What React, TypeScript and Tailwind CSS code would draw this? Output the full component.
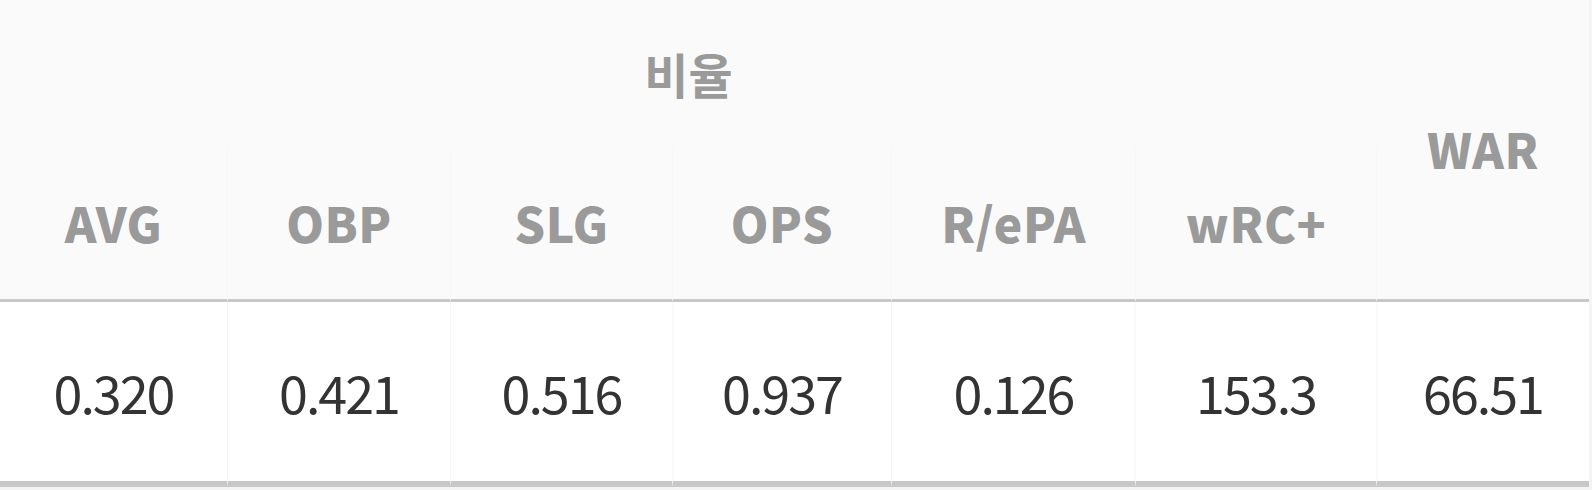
const cols = [
  { key: "AVG", w: "w-[228px]", value: "0.320" },
  { key: "OBP", w: "w-[223px]", value: "0.421" },
  { key: "SLG", w: "w-[222px]", value: "0.516" },
  { key: "OPS", w: "w-[219px]", value: "0.937" },
  { key: "R/ePA", w: "w-[244px]", value: "0.126" },
  { key: "wRC+", w: "w-[241px]", value: "153.3" },
];

export default function App() {
  return (
    <div
      className="h-[490px] w-[1592px] bg-[#f4f4f4]"
      style={{ fontFamily: '"Noto Sans CJK KR", "Noto Sans", sans-serif' }}
    >
      <table className="w-[1589px] table-fixed border-separate border-spacing-0">
        <colgroup>
          {cols.map((c) => (
            <col key={c.key} className={c.w} />
          ))}
          <col className="w-[212px]" />
        </colgroup>
        <thead>
          <tr className="h-[149px] bg-[#fafafa]">
            <th
              colSpan={6}
              className="pb-1 text-center align-middle text-[48px] font-bold text-[#9a9a9a]"
            >
              비율
            </th>
            <th
              rowSpan={2}
              className="border-b-[3px] border-[#c8c8c8] pb-1 text-center align-middle text-[48px] font-black tracking-[0.5px] text-[#9a9a9a]"
            >
              WAR
            </th>
          </tr>
          <tr className="h-[153px] bg-[#fafafa]">
            {cols.map((c) => (
              <th
                key={c.key}
                className="border-r border-b-[3px] border-r-[#f6f6f6] border-b-[#c8c8c8] pb-1 text-center align-middle text-[48px] font-black tracking-[0.5px] text-[#9a9a9a]"
              >
                {c.key}
              </th>
            ))}
          </tr>
        </thead>
        <tbody>
          <tr className="h-[185px] bg-white">
            {cols.map((c) => (
              <td
                key={c.key}
                className="border-r border-b-[6px] border-r-[#f6f6f6] border-b-[#c8c8c8] text-center align-middle text-[52px] tracking-[-2px] text-[#333333]"
              >
                {c.value}
              </td>
            ))}
            <td className="border-b-[6px] border-[#c8c8c8] text-center align-middle text-[52px] tracking-[-2px] text-[#333333]">
              66.51
            </td>
          </tr>
        </tbody>
      </table>
    </div>
  );
}
